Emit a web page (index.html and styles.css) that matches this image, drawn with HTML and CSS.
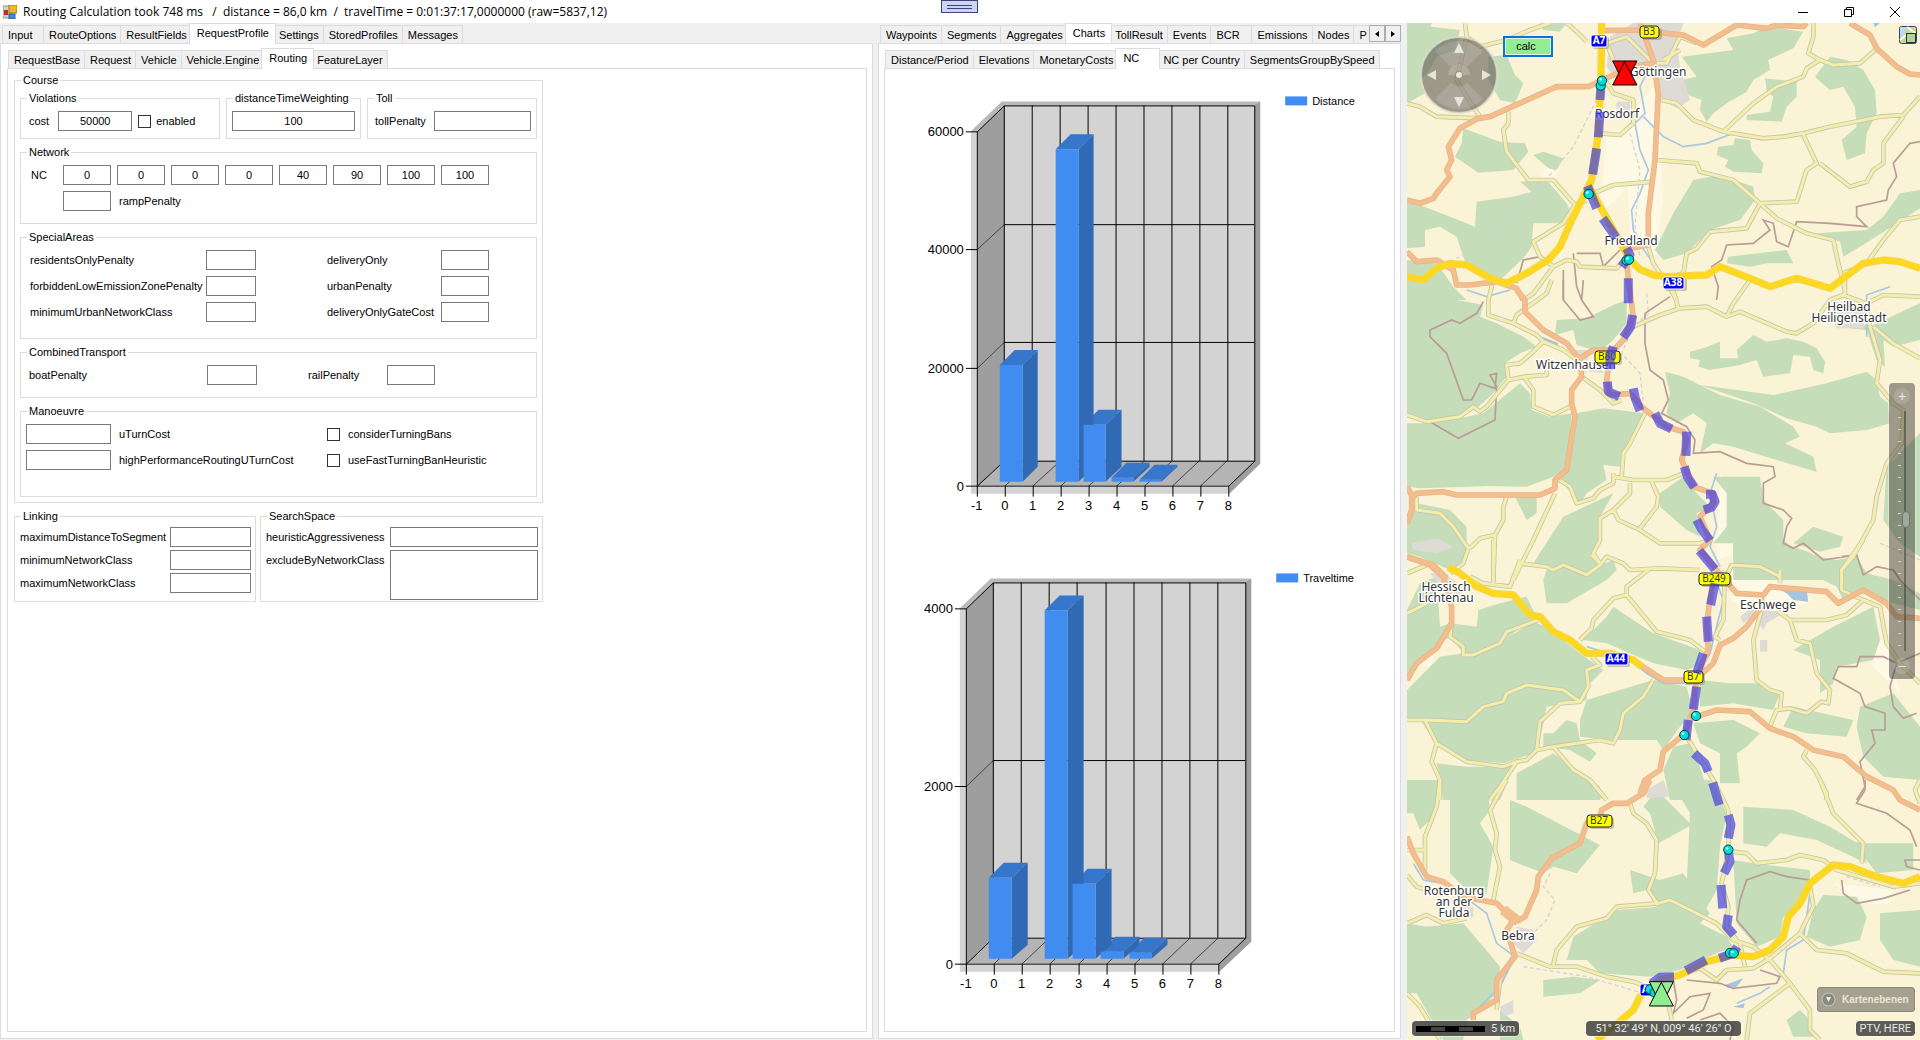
FILE: index.html
```html
<!DOCTYPE html>
<html lang="en">
<head>
<meta charset="utf-8">
<title>Routing Calculation</title>
<link rel="stylesheet" href="styles.css">
</head>
<body>
<div class="app">
  <header class="titlebar">
    <svg class="app-icon" width="14" height="14" viewBox="0 0 14 14" aria-hidden="true">
      <rect x="0" y="1" width="8" height="12" fill="#d4d0d4" stroke="#98949c"/>
      <rect x="1" y="5" width="4" height="5" fill="#c22c20"/>
      <rect x="6" y="0" width="8" height="8" fill="#f0b828" stroke="#a87808"/>
      <rect x="6" y="9" width="6" height="5" fill="#4488e0" stroke="#2860b0"/>
    </svg>
    <h1 class="title">Routing Calculation took 748 ms   /  distance = 86,0 km  /  travelTime = 0:01:37:17,0000000 (raw=5837,12)</h1>
    <button class="grip" type="button" aria-label="Toolbar grip"><span></span></button>
    <div class="window-buttons">
      <button type="button" aria-label="Minimize"><svg width="10" height="10" viewBox="0 0 10 10"><path d="M0 5.5H10"/></svg></button>
      <button type="button" aria-label="Restore"><svg width="10" height="10" viewBox="0 0 10 10"><path d="M.5 2.5H7.5V9.500H.5ZM2.500 2.500V.5H9.500V7.500H7.500"/></svg></button>
      <button type="button" aria-label="Close"><svg width="10" height="10" viewBox="0 0 10 10"><path d="M0 0L10 10M10 0L0 10"/></svg></button>
    </div>
  </header>

  <main class="panes">
    <section class="pane">
      <nav class="tabs" role="tablist" aria-label="Request">
        <button class="tab" role="tab">Input</button>
        <button class="tab" role="tab">RouteOptions</button>
        <button class="tab" role="tab">ResultFields</button>
        <button class="tab selected" role="tab" aria-selected="true">RequestProfile</button>
        <button class="tab" role="tab">Settings</button>
        <button class="tab" role="tab">StoredProfiles</button>
        <button class="tab" role="tab">Messages</button>
      </nav>
      <div class="page">
        <nav class="tabs inner" role="tablist" aria-label="Request profile">
          <button class="tab" role="tab">RequestBase</button>
          <button class="tab" role="tab">Request</button>
          <button class="tab" role="tab">Vehicle</button>
          <button class="tab" role="tab">Vehicle.Engine</button>
          <button class="tab selected" role="tab" aria-selected="true">Routing</button>
          <button class="tab" role="tab">FeatureLayer</button>
        </nav>
        <div class="page inner-page">
          <form class="routing">
            <fieldset class="course">
              <legend>Course</legend>
              <div class="top-row">
                <fieldset class="violations">
                  <legend>Violations</legend>
                  <label for="cost">cost</label>
                  <input class="num" id="cost" type="text" value="50000">
                  <input id="enabled" type="checkbox"><label for="enabled">enabled</label>
                </fieldset>
                <fieldset class="weighting">
                  <legend>distanceTimeWeighting</legend>
                  <input class="num" type="text" value="100" aria-label="distanceTimeWeighting">
                </fieldset>
                <fieldset class="toll">
                  <legend>Toll</legend>
                  <label for="toll">tollPenalty</label>
                  <input id="toll" type="text">
                </fieldset>
              </div>
              <fieldset class="network">
                <legend>Network</legend>
                <div class="nc-row">
                  <span>NC</span>
                  <input class="num" type="text" value="0" aria-label="NC 0">
                  <input class="num" type="text" value="0" aria-label="NC 1">
                  <input class="num" type="text" value="0" aria-label="NC 2">
                  <input class="num" type="text" value="0" aria-label="NC 3">
                  <input class="num" type="text" value="40" aria-label="NC 4">
                  <input class="num" type="text" value="90" aria-label="NC 5">
                  <input class="num" type="text" value="100" aria-label="NC 6">
                  <input class="num" type="text" value="100" aria-label="NC 7">
                  <input class="ramp" id="ramp" type="text"><label class="ramp-label" for="ramp">rampPenalty</label>
                </div>
              </fieldset>
              <fieldset class="special">
                <legend>SpecialAreas</legend>
                <div class="special-grid">
                  <label for="rop">residentsOnlyPenalty</label><input id="rop" type="text">
                  <label for="do">deliveryOnly</label><input id="do" type="text">
                  <label for="flez">forbiddenLowEmissionZonePenalty</label><input id="flez" type="text">
                  <label for="up">urbanPenalty</label><input id="up" type="text">
                  <label for="munc">minimumUrbanNetworkClass</label><input id="munc" type="text">
                  <label for="dogc">deliveryOnlyGateCost</label><input id="dogc" type="text">
                </div>
              </fieldset>
              <fieldset class="combined">
                <legend>CombinedTransport</legend>
                <div class="combined-grid">
                  <label for="boat">boatPenalty</label><input id="boat" type="text">
                  <label for="rail">railPenalty</label><input id="rail" type="text">
                </div>
              </fieldset>
              <fieldset class="manoeuvre">
                <legend>Manoeuvre</legend>
                <div class="manoeuvre-grid">
                  <input id="uturn" type="text"><label for="uturn">uTurnCost</label>
                  <input id="bans" type="checkbox"><label for="bans">considerTurningBans</label>
                  <input id="hpr" type="text"><label for="hpr">highPerformanceRoutingUTurnCost</label>
                  <input id="fast" type="checkbox"><label for="fast">useFastTurningBanHeuristic</label>
                </div>
              </fieldset>
            </fieldset>
            <div class="bottom-row">
              <fieldset class="linking">
                <legend>Linking</legend>
                <div class="pairs">
                  <label for="mds">maximumDistanceToSegment</label><input id="mds" type="text">
                  <label for="minc">minimumNetworkClass</label><input id="minc" type="text">
                  <label for="maxc">maximumNetworkClass</label><input id="maxc" type="text">
                </div>
              </fieldset>
              <fieldset class="search">
                <legend>SearchSpace</legend>
                <div class="pairs">
                  <label for="ha">heuristicAggressiveness</label><input id="ha" type="text">
                  <label for="ebn">excludeByNetworkClass</label><textarea id="ebn"></textarea>
                </div>
              </fieldset>
            </div>
          </form>
        </div>
      </div>
    </section>

    <section class="pane results">
      <div class="tab-strip">
        <nav class="tabs" role="tablist" aria-label="Results">
          <button class="tab" role="tab">Waypoints</button>
          <button class="tab" role="tab">Segments</button>
          <button class="tab" role="tab">Aggregates</button>
          <button class="tab selected" role="tab" aria-selected="true">Charts</button>
          <button class="tab" role="tab">TollResult</button>
          <button class="tab" role="tab">Events</button>
          <button class="tab" role="tab">BCR</button>
          <button class="tab" role="tab">Emissions</button>
          <button class="tab" role="tab">Nodes</button>
          <button class="tab" role="tab">P</button>
        </nav>
        <div class="scroller">
          <button type="button" aria-label="Previous tabs"><svg width="4" height="6" viewBox="0 0 4 6"><path d="M4 0V6L0 3Z"/></svg></button>
          <button type="button" aria-label="Next tabs"><svg width="4" height="6" viewBox="0 0 4 6"><path d="M0 0V6L4 3Z"/></svg></button>
        </div>
      </div>
      <div class="page">
        <nav class="tabs inner" role="tablist" aria-label="Charts">
          <button class="tab" role="tab">Distance/Period</button>
          <button class="tab" role="tab">Elevations</button>
          <button class="tab" role="tab">MonetaryCosts</button>
          <button class="tab selected" role="tab" aria-selected="true">NC</button>
          <button class="tab" role="tab">NC per Country</button>
          <button class="tab" role="tab">SegmentsGroupBySpeed</button>
        </nav>
        <div class="page inner-page charts">
          <svg class="chart" viewBox="885 69 510 481" role="img" aria-label="Distance per network class">
            <path fill="#b9bab9" d="M971 131L1002 101H1261L1255 106H1005L978 132Z"/>
            <path fill="#d3d3d3" d="M971 131H978V487H1230V494H971Z"/>
            <path fill="#9e9e9e" d="M1255 105L1261 101V464L1230 494V486L1255 461Z"/>
            <path fill="#d3d3d3" d="M1005 105H1255V461H1005Z"/>
            <path fill="#9e9e9e" d="M978 131L1005 105V461L978 486Z"/>
            <path fill="#b4b4b4" d="M978 486L1005 461H1255L1230 486Z"/>
            <path class="diag" d="M978 249L1005 224M978 368L1005 342M1005.500 486L1033 461M1033.500 486L1061 461M1061.500 486L1089 461M1089.500 486L1117 461M1117.500 486L1145 461M1145.500 486L1173 461M1173.500 486L1200 461M1201.500 486L1228 461"/>
            <path class="line" d="M1004.500 105.500H1255.500V461.500H1004.500ZM1004.500 224.500H1255M1004.500 342.500H1255M1032.500 105V461M1060.500 105V461M1088.500 105V461M1116.500 105V461M1144.500 105V461M1172.500 105V461M1200.500 105V461M1228.500 105V461"/>
            <path class="line" d="M1004.500 105.500L977.500 131.500V486.500L1004.500 461.500M966 131.500H978M966 249.500H978M966 368.500H978M966 486.500H1229.500L1255.500 461.500M977.500 486V497M1005.500 486V497M1033.500 486V497M1061.500 486V497M1089.500 486V497M1117.500 486V497M1145.500 486V497M1173.500 486V497M1201.500 486V497M1229.500 486V497"/>
            <path class="top" d="M1000 365L1015 350H1038L1023 365ZM1056 149L1071 134H1094L1079 149ZM1084 425L1099 410H1122L1106 425ZM1112 478L1127 463H1150L1134 478ZM1140 480L1155 465H1178L1162 480Z"/>
            <path class="side" d="M1023 365L1038 350V467L1023 482ZM1079 149L1094 134V467L1079 482ZM1106 425L1122 410V467L1106 482ZM1134 478L1150 463V467L1134 482ZM1162 480L1178 465V467L1162 482Z"/>
            <path class="front" d="M1000 365H1023V482H1000ZM1056 149H1079V482H1056ZM1084 425H1106V482H1084ZM1112 478H1134V482H1112ZM1140 480H1162V482H1140Z"/>
            <g class="y-labels"><text x="964" y="136">60000</text><text x="964" y="254">40000</text><text x="964" y="373">20000</text><text x="964" y="491">0</text></g>
            <g class="x-labels"><text x="977" y="510">-1</text><text x="1005" y="510">0</text><text x="1033" y="510">1</text><text x="1061" y="510">2</text><text x="1089" y="510">3</text><text x="1117" y="510">4</text><text x="1145" y="510">5</text><text x="1173" y="510">6</text><text x="1201" y="510">7</text><text x="1229" y="510">8</text></g>
            <rect class="front" x="1286" y="96" width="22" height="9"/><text class="legend" x="1313" y="105">Distance</text>
          </svg>
          <svg class="chart" viewBox="885 550 510 481" role="img" aria-label="Travel time per network class">
            <path fill="#b9bab9" d="M960 608L991 578H1252L1246 583H994L967 609Z"/>
            <path fill="#d3d3d3" d="M960 608H967V965H1220V972H960Z"/>
            <path fill="#9e9e9e" d="M1246 582L1252 578V942L1220 972V964L1246 939Z"/>
            <path fill="#d3d3d3" d="M994 582H1246V939H994Z"/>
            <path fill="#9e9e9e" d="M967 608L994 582V939L967 964Z"/>
            <path fill="#b4b4b4" d="M967 964L994 939H1246L1220 964Z"/>
            <path class="diag" d="M967 786L994 760M994.500 964L1021 939M1022.500 964L1049 939M1050.500 964L1077 939M1079.500 964L1106 939M1107.500 964L1134 939M1135.500 964L1162 939M1163.500 964L1190 939M1191.500 964L1218 939"/>
            <path class="line" d="M993.500 582.500H1246.500V938.500H993.500ZM993.500 760.500H1246M1021.500 582V938M1049.500 582V938M1077.500 582V938M1106.500 582V938M1134.500 582V938M1162.500 582V938M1190.500 582V938M1218.500 582V938"/>
            <path class="line" d="M993.500 582.500L966.500 608.500V964.500L993.500 938.500M955 608.500H967M955 786.500H967M955 964.500H1219.500L1246.500 938.500M966.500 964V975M994.500 964V975M1022.500 964V975M1050.500 964V975M1079.500 964V975M1107.500 964V975M1135.500 964V975M1163.500 964V975M1191.500 964V975M1219.500 964V975"/>
            <path class="top" d="M989 878L1004 863H1028L1012 878ZM1045 610L1060 595H1084L1068 610ZM1073 884L1088 869H1112L1096 884ZM1101 952L1116 937H1140L1124 952ZM1130 953L1145 938H1168L1152 953Z"/>
            <path class="side" d="M1012 878L1028 863V945L1012 959ZM1068 610L1084 595V945L1068 959ZM1096 884L1112 869V945L1096 959ZM1124 952L1140 937V945L1124 959ZM1152 953L1168 938V945L1152 959Z"/>
            <path class="front" d="M989 878H1012V959H989ZM1045 610H1068V959H1045ZM1073 884H1096V959H1073ZM1101 952H1124V959H1101ZM1130 953H1152V959H1130Z"/>
            <g class="y-labels"><text x="953" y="613">4000</text><text x="953" y="791">2000</text><text x="953" y="969">0</text></g>
            <g class="x-labels"><text x="966" y="988">-1</text><text x="994" y="988">0</text><text x="1022" y="988">1</text><text x="1050" y="988">2</text><text x="1079" y="988">3</text><text x="1107" y="988">4</text><text x="1135" y="988">5</text><text x="1163" y="988">6</text><text x="1191" y="988">7</text><text x="1219" y="988">8</text></g>
            <rect class="front" x="1277" y="573" width="22" height="9"/><text class="legend" x="1304" y="582">Traveltime</text>
          </svg>
        </div>
      </div>
    </section>

    <section class="map" aria-label="Map">
      <svg class="map-canvas" viewBox="1407 23 513 1017" preserveAspectRatio="xMidYMid slice">
        <defs>
          <g id="minor">
            <path d="M21 310L60 320 110 350 240 355M500 69L530 95 560 125M195 69L200 110 240 140 320 120 390 90 450 69M200 110L170 240 200 290 240 350M325 335L325 370 310 390 320 455 385 540 460 540 525 615 560 600M525 615L490 670 400 725 420 770 460 800 500 780 530 785 540 800 650 805 680 770M460 800L400 880 370 900M580 580L640 555 700 550 760 545M770 480L890 490 900 515 1000 540 1080 610 1130 655 1220 700 1300 720 1315 790 1335 870M785 300L830 310 880 360 970 395 1090 415 1150 410 1210 400 1290 380 1440 350 1510 345 1560 290M970 395L1060 310 1130 260 1210 230 1220 205 1260 180 1225 160 1240 110V69M1260 180L1300 195 1380 190 1425 150M1210 405L1250 490 1220 510 1190 605 1080 610 1040 685 930 695 890 745 860 760 850 820 800 835M1260 490L1350 560 1400 545 1420 510 1450 490V430L1510 350M1560 650L1500 660 1450 720 1400 790 1330 820M745 740L760 790 800 850 830 900M600 400L660 405 700 370V300L640 280 610 230M640 180L620 130 680 110 750 180M760 190L800 190 840 110 890 130M790 180L840 150"/>
            <path transform="translate(0 840)" d="M455 0L440 40 350 105 340 130 265 105 265 60 280 0M340 130L410 165 430 185 490 210 530 240M430 185L400 215 360 250 320 255 325 300 375 290 440 285V260M325 300L260 380 240 395 220 380 180 410 80 425 21 405M375 295L400 330V380L460 405 510 380M545 290L600 330 640 370 665 360M735 400L690 490 670 520 665 590M640 590L700 600 800 600 850 580M640 580V610L600 630 580 655 530 670 510 620 470 595M690 610V640L640 690 655 720 720 750 780 790 900 790 930 780M755 605L775 650 770 680 720 745M640 690L600 715V780L580 820 600 850M700 140L780 105 840 85 920 80 980 110 1020 95 1160 155 1190 160 1240 130 1290 60 1330 45 1400 70 1450 45 1560 50M980 110L1000 70 1050 0M820 30L835 85M1335 0V45M1400 70L1410 140 1440 240 1430 310 1480 370 1510 390 1505 490 1460 550 1430 650 1420 720 1360 830 1325 870V930M1420 140L1480 190 1560 235M50 650V690L120 700 160 740 205 805 215 800 240 775 285 765 280 900M320 650L310 680V720L285 765M465 640L400 780 340 900M360 850L440 860 460 870 490 855 560 885 600 855 620 830 670 850 690 870 780 865 900 870M975 900L995 855 1080 860 1140 890M205 805L190 850 150 880M600 850L575 825"/>
            <path transform="translate(0 1620)" d="M360 60L330 140 250 130 210 110M280 130V0M680 165L640 175 580 240 575 265 540 300M745 90L680 140V165L770 275 870 300 915 335M415 240L320 275 300 310 220 345 190 345V320L150 290 155 250M21 540L75 540 200 545 250 500 310 485 320 460 380 435 490 450 540 485 565 440 560 390 600 375 575 350M540 485L480 490 420 545 410 630 460 620 600 600 640 610 660 570 670 520 730 470 760 420M410 630L380 660 350 665 300 740 270 780M75 540L110 610 200 665 310 680 350 665M110 610L95 665 120 720V780M460 620L520 690 570 720 620 780M975 90L970 240 945 290 960 300M1170 240L1280 240 1340 225 1390 180 1440 200 1460 310 1500 370 1560 430M1170 240L1190 300 1230 310 1250 400 1290 450 1285 490 1265 485 1220 520 1170 505 1130 510 1110 560M1090 190L1060 300 1070 420 1110 450 1145 460 1140 510M1130 210L1170 240M1390 0L1325 90V150L1390 180M1220 630L1210 650 1245 690 1280 760V780M860 590L940 720 985 810M1140 90V130M21 220L80 190M21 100L80 75"/>
            <path transform="translate(0 2340)" d="M320 0L270 90 290 160 285 210 300 260 280 360M120 0L110 80 75 170V270M75 210H21M570 0L620 60M690 70L700 100 740 130 770 180 765 280 745 330 775 375M350 520L450 560 530 560 620 590 700 605 750 625M460 555L470 510 530 440 620 415 650 380 775 370 810 360 950 430 1000 480 1060 500 1110 540 1170 610 1230 690V750L1260 780M985 90V210L965 310 985 380 980 440 1010 480M1000 215L1040 220 1070 250 1160 240 1200 225 1270 240 1310 270 1480 320 1560 310M1260 0L1280 50 1300 100 1390 190 1385 250M820 590L900 565 950 600 980 570 1060 565 1110 535 1200 460 1240 380 1230 320M1200 460L1250 510 1340 520 1450 575 1560 580M1170 610L1050 700 1040 780M345 520L300 600 290 690M21 430L80 405 130 430 200 415M21 640L60 680 120 780M21 285L50 320 80 330M1020 490L1035 560M805 670L815 720M1560 0L1545 30 1560 70"/>
          </g>
          <g id="major">
            <path d="M21 600L60 610 100 595 110 580 150 530 140 510 155 480 145 440 180 385 235 355 270 350 370 305 470 260H565L640 225 700 200 760 190M600 92L720 90 800 100 850 105 910 135 1010 75 1100 85 1130 75 1210 80 1220 69M720 69L760 180 775 280 765 480 745 640V735L665 750M1350 69L1410 105 1430 145 1490 200 1530 222 1560 225M21 755L50 785 110 780 160 810 170 855 210 855 290 845 350 865 370 900"/>
            <path transform="translate(0 840)" d="M350 30L375 60 375 95 430 150 500 190 520 215 540 240 545 290 515 330 515 370 525 410 515 470 500 570 465 600V625L420 645 290 645 170 645 130 635 50 640 35 655V690L21 730M21 620L40 655M540 235L580 210 640 210 670 180 700 110 685 0 680 -60M630 230L620 300 630 345 690 340 730 385 800 440 850 455 860 480 845 540 880 620 940 640V670L900 710 930 780 900 810 950 870M21 830L100 855 140 895"/>
            <path transform="translate(0 1620)" d="M21 50L90 75 130 110 155 200V250L110 325 50 370 21 420M950 90L1010 160 1090 165 1110 140 1280 155 1315 190 1390 150 1460 190 1490 230 1560 235M1085 170V200L1040 260 1000 295 960 315 940 370 895 410M940 110L920 250 925 330 890 410 880 510 855 580 790 635 780 690 735 720 720 760M720 375L790 420H880M890 530L950 510 1050 515 1110 565 1180 590 1240 630 1330 650 1400 710 1480 750 1500 780 1560 810"/>
            <path transform="translate(0 2340)" d="M750 0L730 40 680 70 640 70 605 90 600 110 560 130 540 190 455 235 415 290 410 330 375 410 350 425M21 170L40 220 80 290 130 305 190 350 290 370 340 420 320 450 345 530 290 600V660L220 700V720"/>
            <path transform="translate(0 2340)" stroke-width="30" d="M310 390L355 425"/>
          </g>
          <g id="motorway">
            <path d="M605 69L603 230 595 400 575 540 515 660 480 740 445 780 380 820 320 850 270 835 200 795 150 790 110 805 70 840 21 830M568 560L640 690 690 780 720 808 760 825 800 830 920 825 960 800 1050 835 1110 860 1190 835 1290 865 1390 790 1450 780 1500 785 1560 805"/>
            <path transform="translate(0 1620)" d="M145 82L180 100 230 140 280 160 340 165 390 225 420 230 460 275 510 300 560 340 630 340 700 360 725 380"/>
            <path transform="translate(0 2340)" d="M590 780L640 740 700 690 720 650 780 600 840 585 920 545 1000 525 1060 530 1110 510 1150 470 1165 410 1200 370 1230 310 1300 255 1350 260 1430 290 1510 310 1560 290"/>
          </g>
          <g id="forests">
            <path d="M21 69H95L92 80 180 90 165 150 110 170 85 215 60 240 75 280 21 310ZM265 170L320 165 345 225 370 250 345 310 300 300 265 240ZM420 69H500L480 95 430 90ZM190 385L300 425 375 430 385 455 340 510 235 518 165 470 185 430ZM400 465L430 455 490 475 470 510 445 505ZM360 545L440 540 500 610 515 640 480 670 400 670 395 740 370 775 290 850 200 800 170 710 120 680 75 690 75 740 21 745V610L60 615 150 650 225 680 230 605 340 590 395 575ZM21 780L110 790 160 860 200 900H21ZM845 170L1000 150 980 115 1060 100 1110 75 1170 90 1210 95 1180 145 1105 180 1110 210 1060 240 1040 275 980 310 940 340 920 365 900 330 905 300 850 280 845 240 890 230ZM1095 235L1190 245V290L1160 320 1145 365 1040 360V345L1110 335 1120 290 1100 270ZM1245 230L1290 170 1340 180 1390 210 1425 270 1430 340 1400 400 1395 460 1340 480 1325 420 1370 380 1365 320 1330 260 1290 270ZM955 440L1000 435 1005 415 1050 420 1055 450 1090 490 1085 520 1000 515 975 500 985 480 950 465ZM880 540L960 525 1060 560 1065 600 1020 660 930 690 890 730 860 760 790 780 765 750 800 680 820 640ZM1560 570V625L1460 690 1380 740 1330 770 1320 725 1250 700 1400 690 1450 650 1500 580ZM985 770L1160 750 1180 790 1100 790 1050 800 980 790Z"/>
            <path transform="translate(0 840)" d="M21 20L120 50 250 75 240 110 290 130 370 170 410 200 360 220 315 250 320 290 280 340 230 385 180 410 90 425 21 405ZM21 430L90 430 180 415 250 400 360 310 390 340 395 390 450 410 515 400 500 570 460 590 380 620 265 618 60 625 21 620ZM530 400L610 385 735 400 700 470 670 510 660 560 610 555 620 600 560 640 540 670 480 600 495 580 505 500ZM470 120L560 115 640 75 680 60 680 130 640 180 600 215 530 195 520 150 465 165ZM870 215L910 205 960 185V235L1015 235 1010 210 1060 165 1100 185 1160 175 1210 185 1250 205 1275 245 1270 280 1240 270 1230 230 1180 225 1170 280 1090 290 1070 240 1020 255 930 270 895 260 900 240 870 235ZM795 275L850 290 960 345 1080 380 1180 440 1200 470 1155 490 1240 530 1250 575 1130 540 1000 500 940 490 900 520 920 430 880 400 830 430 800 400 810 340ZM900 315L1120 345 1280 310 1400 275 1430 300 1440 350 1465 370 1470 430 1400 450 1290 460 1250 440 1160 415 1060 370ZM1300 140L1420 135 1560 70V180L1480 200 1450 180 1455 260 1430 240 1400 150ZM940 590L1080 590 1090 660 1150 720V790L1210 810 1280 840 1280 900H1000V790H940L980 740V640ZM1180 790L1240 740 1330 770 1320 800 1260 815ZM1460 560L1560 460V830L1500 790 1450 720ZM780 640L850 590 890 640 930 680 890 700 900 770 860 750 780 680ZM50 670L150 690 200 740 200 840 150 870 60 830 21 820V700ZM345 650H410V700L380 720ZM490 710L640 640 600 710V780L570 830 600 860 550 880 400 850Z"/>
            <path transform="translate(0 1620)" d="M450 60L560 90 640 60 650 90 620 120 500 190 440 190 430 120ZM1000 0H1150L1200 40 1310 60 1370 50 1400 100 1480 120 1560 160V210L1480 190 1390 160 1330 180 1310 140 1250 110 1140 90 1000 60ZM21 210L60 130 110 110 120 260 150 250 230 260 235 210 300 190 380 170 410 230 380 250 300 310 200 350 150 290 100 320 21 420ZM190 340L310 300 400 245 440 260 540 340 610 390 560 440V480L540 485 440 500 420 600 400 640 310 670 200 660 110 610 60 540 21 540V450L120 350ZM620 230L640 200 760 280 900 330 890 380 860 390 760 370 620 310 550 300ZM560 480L760 420 860 440 880 520 840 560 790 630 770 600 630 600 540 590V540ZM430 580L460 580 500 540 530 550 540 600 590 640 570 665 510 630 430 620ZM900 420L990 430 1080 430 1140 460 1120 510 1000 490 900 500ZM1180 330L1300 260 1420 200 1440 300 1420 360 1310 380 1300 430 1260 460V360ZM1380 500L1480 460 1560 560V720L1450 710 1390 650 1370 560ZM880 550L1000 540 1080 580 1040 620 1010 640 1020 730H960V640L900 610ZM1180 500L1360 540 1340 590 1220 580 1150 560ZM820 620L870 610 900 680 930 780H810L790 690ZM110 670L200 680 340 680 300 780H130ZM350 700L460 640 520 680 600 740V780H350Z"/>
            <path transform="translate(0 2340)" d="M21 0H130L120 60 90 120 60 150 40 100 21 100ZM150 60L260 0 270 90 240 130 280 200 260 340 200 330 150 280ZM350 0H560L620 60 500 30ZM330 60L380 80 600 195 530 280 460 260 430 280 330 240ZM770 30L820 80 875 135 775 190 750 100 730 80ZM690 270L780 300 850 280 900 360 930 400 900 430 770 380 740 330 700 340ZM810 0H930L980 100 960 200 950 330 900 420 850 400 780 350 860 320 870 100ZM650 390L780 380 900 430 980 470 1000 500 900 540 840 570 750 590 600 580 560 540 500 540 520 470ZM1030 80L1180 90 1290 140 1390 200 1400 250 1250 180 1140 160 1100 200 1030 190ZM1000 240L1060 250 1230 270V300L1210 360 1150 410 1140 470 1070 500 1010 430ZM1240 390L1270 345 1370 350 1400 410 1380 480 1290 500 1220 470ZM1440 400L1560 390V560L1480 540 1440 480ZM1220 160L1390 190 1540 190V270L1430 280 1400 240ZM21 430L80 440 190 430 250 500 300 560 290 640 240 690 200 720 190 780H130L50 640 21 640ZM300 690L360 740 370 780H300ZM430 600L520 590 600 600 540 640 430 650ZM1160 720L1200 690 1230 720 1240 770H1180Z"/>
          </g>
        </defs>

        <g transform="scale(.33333)">
          <g transform="translate(4200 0)">
          <rect x="0" y="0" width="1600" height="3140" fill="#faf3d6"/>
          <path fill="#fef9e4" d="M700 330L760 260 780 400 790 600 760 800 690 700 680 500ZM620 400L700 380 690 560 600 640ZM440 500L480 480 460 560 400 590ZM30 1900L110 1950 90 2000 30 2000ZM960 1420L1000 1500 1010 1660 950 1680ZM1000 1700L1130 1740 1240 1800 1100 1860 990 1800ZM1400 1900L1470 1930 1500 2080 1420 2000ZM1300 2650L1480 2670 1470 2710 1380 2710Z"/>
          <use href="#forests" class="forest"/>
          <path fill="#dedbd5" d="M630 110L700 69H850L830 130 840 200 870 300 830 325 785 300 760 200 720 230 650 240 620 200ZM650 305H690V335H650ZM1310 905L1400 920 1390 985 1310 985 1290 940ZM520 1050L570 1050 560 1090 550 1120 600 1100 610 1120 530 1110ZM35 1630L110 1615 160 1640 110 1660 40 1650ZM90 1720L130 1720 190 1760 180 1790 150 1790ZM1020 1850L1060 1820 1150 1840 1100 1870 1090 1890 1060 1850 1030 1870ZM740 2370L790 2340 810 2390 740 2395ZM350 2780L400 2790 410 2820 370 2860 340 2830ZM300 3020L340 3000 340 3040 310 3050ZM1080 1920H1102V1955H1080ZM180 2720H220V2750H190Z"/>
          <path class="water" d="M750 200L720 260 735 340 705 370 720 450 745 510 720 580 695 630 700 690 725 740 780 820M730 350L790 410 850 440 920 430 1000 400M200 870L260 890 330 870M420 1010L470 1030M950 1420L930 1480 950 1580 930 1640 960 1700M940 1720L970 1800 930 1960 880 2050 790 2050 740 2020 690 1980 560 1940M40 2590L70 2640 130 2650 220 2710 260 2740 290 2830 345 2870 300 2960 240 3020M1400 1010V885L1470 860M1230 2680L1210 2820 1160 2850 1150 2920M1010 3010L1080 2980 1110 2960"/>
          <path fill="#a6c4de" d="M1120 1760L1220 1770 1225 1805 1180 1800 1160 1780ZM420 1010L475 1030 470 1040 430 1030ZM975 2955L1030 2935 1010 2960 985 2965ZM1000 3020L1035 3010 1030 3025ZM1420 69H1440L1425 82Z"/>
          <path class="rail" d="M600 280L520 440 330 670 170 775M690 400L720 510 705 680 720 770M740 880L745 940 700 980 665 1060 720 1120 730 1210M160 1610L180 1660 150 1700M450 2620L430 2660 465 2700 440 2760 400 2800M370 2900L560 2930 730 2980M1440 1630L1560 1680M1340 2630L1440 2660"/>
          <path class="border" d="M1560 425L1530 430 1480 490 1490 530 1465 570 1460 600 1370 620V650L1400 680 1290 670 1190 665 1165 740 1130 725 1120 670 1090 660 1110 690 1060 730 980 735 965 780 935 800 955 860 950 900M420 770L370 780 350 850M530 760L600 760 610 800 660 750M490 810V900M520 760L530 860 545 900"/>
          <path class="border" transform="translate(0 840)" d="M250 65L230 100 180 130 155 120 90 150V170L140 220 190 360 215 360 240 310 285 325 290 280 270 285 290 320 285 420 175 475 90 425M490 0V60L540 120 580 110 545 60 550 0M810 50L735 100V190L750 270 790 300 805 360 785 400 860 440 885 480 880 520 960 515 1040 550 1120 560 1125 590 1090 610V670L1150 690 1175 715 1160 740 1150 790 1180 805 1210 790 1270 840 1370 825 1390 885 1430 860 1480 870M1370 825L1325 830"/>
          <path class="border" transform="translate(0 1620)" d="M1480 90L1500 120 1560 180M1560 340L1490 370 1450 350 1380 350 1370 380 1315 380 1300 415 1380 460 1395 500 1455 520V570L1415 570 1425 610 1380 665 1395 740 1370 780M1490 370L1470 440 1480 500 1510 535 1550 520"/>
          <path class="border" transform="translate(0 2340)" d="M1395 0V30L1370 70 1460 100 1530 150 1550 200M1560 240L1515 240 1520 260 1560 270M1070 490L1010 420 1020 360 1040 300 1110 275 1160 290 1230 300M1325 300L1330 340 1370 370 1450 355 1530 330M820 600L830 660 820 700 870 650 930 640 910 690 860 715M860 600L960 610 1000 625 1130 610 1140 590 1080 570M900 720L960 700 1000 740 990 780"/>
          <use href="#minor" class="road minor-case"/><use href="#minor" class="road minor-fill"/>
          <use href="#major" class="road major-case"/><use href="#major" class="road major-fill"/>
          <use href="#motorway" class="road motorway-case"/><use href="#motorway" class="road motorway-fill"/>
          </g>
        </g>

        <g class="place">
          <text x="1658" y="76">Göttingen</text><text x="1617" y="118">Rosdorf</text><text x="1631" y="245">Friedland</text>
          <text x="1849" y="311">Heilbad</text><text x="1849" y="322">Heiligenstadt</text><text x="1576" y="369">Witzenhausen</text>
          <text x="1446" y="591">Hessisch</text><text x="1446" y="602">Lichtenau</text><text x="1768" y="609">Eschwege</text>
          <text x="1454" y="895">Rotenburg</text><text x="1454" y="906">an der</text><text x="1454" y="917">Fulda</text><text x="1518" y="940">Bebra</text>
        </g>
        <g fill="#807860" opacity=".4">
          <rect x="1593" y="37" width="16" height="12" rx="2"/><rect x="1642" y="28" width="20" height="12" rx="3"/><rect x="1665" y="279" width="22" height="12" rx="2"/><rect x="1597" y="353" width="25" height="12" rx="3"/><rect x="1701" y="575" width="31" height="12" rx="3"/><rect x="1685" y="673" width="20" height="12" rx="3"/><rect x="1607" y="655" width="23" height="12" rx="2"/><rect x="1589" y="817" width="25" height="12" rx="3"/>
        </g>
        <g class="shield-a">
          <rect x="1591" y="35" width="16" height="12" rx="2"/><rect x="1663" y="277" width="21" height="12" rx="2"/><rect x="1605" y="653" width="23" height="12" rx="2"/><rect x="1640" y="984" width="16" height="12" rx="2"/>
          <text x="1599" y="44">A7</text><text x="1673" y="286">A38</text><text x="1616" y="662">A44</text><text x="1648" y="993">A4</text>
        </g>
        <g class="shield-b">
          <rect x="1640" y="26" width="19" height="12" rx="3"/><rect x="1595" y="351" width="25" height="12" rx="3"/><rect x="1699" y="573" width="31" height="12" rx="3"/><rect x="1684" y="671" width="19" height="12" rx="3"/><rect x="1587" y="815" width="25" height="12" rx="3"/>
          <text x="1649" y="35">B3</text><text x="1607" y="360">B80</text><text x="1714" y="582">B249</text><text x="1693" y="680">B7</text><text x="1599" y="824">B27</text>
        </g>

        <g transform="scale(.33333)">
          <g transform="translate(4200 0)">
            <g class="route">
              <path d="M603 255L600 300M600 335L595 412M590 445L578 523M562 558L590 625M608 655L648 712M680 745L690 765 665 800M685 835V910"/>
              <path transform="translate(0 840)" d="M698 105L692 140 670 172M640 200L630 230V268M622 305L625 335 658 350M700 325L706 355 720 392M765 400L780 430 815 447M860 455L858 528M853 560L862 590 883 622M918 643L937 643 945 665 935 682 912 690M890 720L905 748 930 782M898 812L945 868"/>
              <path transform="translate(0 1620)" d="M945 130L932 195M920 230L925 305M910 340L890 400M890 440L880 508M865 540L858 600M882 640L915 670 925 695M938 728L958 795"/>
              <path transform="translate(0 2340)" d="M985 105L993 135 985 175M985 215L990 245 972 280M963 315L968 385M985 405L980 440 1002 465M1012 500L1000 520 958 535M918 540L858 572M822 590L780 592 755 610"/>
            </g>
            <g class="stop">
              <circle cx="602" cy="257" r="14"/><circle cx="606" cy="242" r="14"/><circle cx="566" cy="582" r="14"/><circle cx="680" cy="781" r="14"/><circle cx="687" cy="779" r="14"/><circle cx="888" cy="2148" r="14"/><circle cx="853" cy="2205" r="14"/><circle cx="985" cy="2549" r="14"/><circle cx="990" cy="2859" r="14"/><circle cx="1001" cy="2860" r="14"/><circle cx="750" cy="2968" r="14"/><circle cx="764" cy="2978" r="14"/>
            </g>
            <g fill="#b4ffff"><circle cx="602" cy="238" r="4"/><circle cx="562" cy="578" r="4"/><circle cx="683" cy="775" r="4"/><circle cx="884" cy="2144" r="4"/><circle cx="849" cy="2201" r="4"/><circle cx="981" cy="2545" r="4"/><circle cx="997" cy="2856" r="4"/></g>
            <g stroke="#000" stroke-width="3">
              <path fill="#f00" d="M638 183H711L674 255Z"/><path fill="#f00" d="M674 185L711 255H638Z"/>
              <path fill="#90ee90" d="M748 2945H820L784 3018Z"/><path fill="#90ee90" d="M784 2947L820 3018H748Z"/>
            </g>
          </g>
        </g>
      </svg>

      <button class="compass" type="button" aria-label="Pan map">
        <svg width="80" height="80" viewBox="0 0 80 80">
          <circle cx="40" cy="40" r="38" fill="#66605a" fill-opacity=".62" stroke="#dcdccc" stroke-opacity=".8" stroke-width="2"/>
          <path d="M16 16L32 32A11 11 0 0 1 48 32L64 16A34 34 0 0 0 16 16ZM16 64L32 48A11 11 0 0 0 48 48L64 64A34 34 0 0 1 16 64Z" fill="#fff" fill-opacity=".14"/>
          <path d="M29 40A11 11 0 0 1 51 40H44A4 4 0 0 0 36 40Z" fill="#fff" fill-opacity=".2"/>
          <path d="M40 8L45 18H35ZM40 72L45 62H35ZM8 40L17 35V45ZM72 40L63 35V45Z" fill="#e4e6dc"/><circle cx="40" cy="40" r="3" fill="#e8eae0"/>
        </svg>
      </button>
      <button class="calc" type="button">calc</button>
      <button class="overview" type="button" aria-label="Overview map">
        <svg width="18" height="18" viewBox="0 0 18 18"><rect x=".5" y=".5" width="17" height="17" rx="2" fill="#c8d898" stroke="#34455c"/><path d="M1 1H7L5 8 1 12Z" fill="#b8dcf0"/><path d="M8 1L16 7M1 14L7 9" stroke="#fff" stroke-width="2"/><rect x="7.500" y="7.500" width="9" height="9" fill="#b4d48c" stroke="#1c3450"/></svg>
      </button>
      <div class="zoom">
        <button type="button" aria-label="Zoom in">+</button>
        <input type="range" min="0" max="100" value="55" aria-label="Zoom level">
        <button type="button" aria-label="Zoom out">−</button>
      </div>
      <button class="layers" type="button"><svg width="15" height="15" viewBox="0 0 15 15"><circle cx="7.500" cy="7.500" r="6.500" fill="#8c8a80" stroke="#c8c8bc"/><path d="M5 5H10L7.500 10Z" fill="#f0f0e8"/></svg>Kartenebenen</button>
      <footer class="status">
        <div class="badge"><span class="scale-bar"></span>5 km</div>
        <div class="badge coords">51° 32′ 49″ N, 009° 46′ 26″ O</div>
        <div class="badge source">PTV, HERE</div>
      </footer>
    </section>
  </main>
</div>
</body>
</html>
```
FILE: styles.css
```css
* { box-sizing: border-box; }
body { margin: 0; background: #f0f0f0; color: #000; font: 11px/14px "Liberation Sans", Arial, sans-serif; }
button, input, textarea { font: inherit; color: inherit; margin: 0; padding: 0; border-radius: 0; }
.app { min-height: 600px; height: 100vh; display: flex; flex-direction: column; }

.titlebar { position: relative; height: 23px; flex: none; background: #fff; display: flex; align-items: center; padding: 0 13px 0 3px; }
.app-icon { flex: none; }
.title { margin: 0 0 0 6px; font: 12px/20px "Open Sans", "Segoe UI", sans-serif; white-space: pre; flex: 1; }
.grip { position: absolute; top: 0; left: 49%; width: 37px; height: 13px; border: 1px solid #3b4478; background: #ccd4f0; display: grid; place-items: center; }
.grip span { width: 25px; height: 4px; border: solid #3b4478; border-width: 1px 0; }
.window-buttons { display: flex; }
.window-buttons button { width: 46px; height: 20px; border: 0; background: none; }
.window-buttons button:last-child { width: 25px; margin-left: 10px; }
.window-buttons svg { display: block; margin: auto; fill: none; stroke: #000; stroke-width: 1; }

.panes { flex: 1; min-height: 0; display: grid; grid-template-columns: 873fr 524fr 513fr; grid-template-rows: minmax(0, 1fr); gap: 5px; }
.pane { min-width: 0; display: flex; flex-direction: column; padding-bottom: 1px; }
.results { padding-right: 1px; }
.tab-strip { display: flex; }
.tabs { display: flex; align-items: flex-end; height: 20px; padding: 0 2px; min-width: 0; }
.tab-strip .tabs { flex: 1; overflow: hidden; }
.tab { position: relative; flex: none; height: 18px; min-width: 42px; margin-right: -1px; padding: 0 4px 0 5px; border: 1px solid #dcdcdc; border-bottom: 0; background: #f0f0f0; text-align: left; line-height: 16px; white-space: nowrap; }
.tab.selected { z-index: 1; height: 21px; margin: 0 -3px -1px -2px; padding: 0 6px 3px 7px; background: #fff; min-width: 45px; }
.inner { height: 24px; padding-left: 1px; }
.scroller { display: flex; width: 32px; height: 17px; margin: 2px 0 0; }
.scroller button { flex: 1; border: 1px solid #adadad; background: #f0f0f0; display: grid; place-items: center; }
.page { flex: 1; min-height: 0; display: flex; flex-direction: column; border: 1px solid #dcdcdc; background: #fff; padding: 0 5px 6px 6px; }
.results .page { padding-left: 5px; }
.inner-page { padding: 4px 6px; }

.routing { width: 529px; max-width: 100%; }
.routing label, .routing span { white-space: nowrap; }
fieldset { margin: 0; min-width: 0; border: 1px solid #dcdcdc; padding: 6px 5px; }
legend { padding: 0 2px; margin-left: 1px; line-height: 14px; }
.routing input[type="text"], textarea { display: block; width: 100%; min-width: 0; height: 20px; border: 1px solid #7a7a7a; background: #fff; }
textarea { resize: none; height: 50px; }
.num { text-align: center; }
input[type="checkbox"] { appearance: none; width: 13px; height: 13px; border: 1px solid #333; background: #fff; flex: none; }
.course { display: flex; flex-direction: column; gap: 6px; padding: 4px 5px 5px; }
.top-row { display: grid; grid-template-columns: 200px 135px 170px; gap: 6px; }
.top-row fieldset { display: flex; align-items: center; padding-bottom: 7px; }
.violations label { margin-left: 3px; }
.violations .num { flex: 0 0 74px; margin: 0 6px 0 9px; }
.violations label:last-child { margin-left: 5px; }
.toll label { margin: 0 6px 0 2px; flex: 0 0 53px; }
.network { padding-bottom: 12px; }
.nc-row { display: grid; grid-template-columns: 27px repeat(8, 48px); gap: 6px; align-items: center; padding-left: 4px; }
.nc-row span { padding-left: 1px; }
.ramp { grid-column: 2; }
.ramp-label { grid-column: 3 / 6; padding-left: 2px; }
.special { padding-bottom: 16px; }
.special-grid { display: grid; grid-template-columns: 176px 50px 71px 114px 48px; row-gap: 6px; align-items: center; padding-left: 4px; }
.special-grid label:nth-of-type(even) { grid-column: 4; }
.combined { padding-bottom: 12px; }
.combined-grid { display: grid; grid-template-columns: 178px 50px 51px 79px 48px; align-items: center; padding-left: 3px; }
.combined-grid label:nth-of-type(even) { grid-column: 4; }
.manoeuvre { padding-bottom: 26px; }
.manoeuvre-grid { display: grid; grid-template-columns: 85px 200px 13px auto; gap: 6px 8px; align-items: center; }
.bottom-row { display: grid; grid-template-columns: 242px 283px; gap: 4px; margin-top: 6px; }
.bottom-row fieldset { padding: 4px 4px 8px 5px; }
.pairs { display: grid; grid-template-columns: 1fr 81px; row-gap: 3px; align-items: center; }
.bottom-row .search { padding-bottom: 1px; }
.search .pairs { grid-template-columns: 1fr 148px; align-items: start; }
.search label { line-height: 20px; }

.charts, .results .charts { padding: 0; }
.chart { display: block; flex: 1; min-height: 0; width: 100%; }
.line, .diag { fill: none; stroke: #000; }
.diag { stroke: #444; }
.front { fill: #418cf0; }
.top { fill: #3676cb; }
.side { fill: #3069b4; }
.y-labels, .x-labels { font-size: 13px; text-anchor: end; }
.x-labels { text-anchor: middle; }
.legend { font-size: 11px; }

.map { position: relative; overflow: hidden; background: #faf3d6; }
.map-canvas { display: block; width: 100%; height: 100%; }
.forest { fill: #c5ddb9; }
.water { fill: none; stroke: #a6c8e4; stroke-width: 5; }
.rail { fill: none; stroke: #d4d4d4; stroke-width: 4; stroke-dasharray: 12 8; }
.border { fill: none; stroke: #b89c96; stroke-width: 5; }
.road { fill: none; stroke-linejoin: round; }
.minor-case { stroke: #c6c2b6; stroke-width: 14; }
.minor-fill { stroke: #f3efa8; stroke-width: 9; }
.major-case { stroke: #e8b48c; stroke-width: 17; }
.major-fill { stroke: #f3bd8c; stroke-width: 12; }
.motorway-case { stroke: #f6d458; stroke-width: 22; }
.motorway-fill { stroke: #fcd81e; stroke-width: 17; }
.place { font: 12px "Noto Sans", sans-serif; text-anchor: middle; fill: #333; stroke: #fff; stroke-width: 3px; stroke-linejoin: round; paint-order: stroke; }
.shield-a, .shield-b { font: 10px "Noto Sans", sans-serif; text-anchor: middle; }
.shield-a rect { fill: #0000f0; stroke: #fff; }
.shield-a text { fill: #fff; font-weight: bold; }
.shield-b rect { fill: #ff0; stroke: #222; }
.shield-b text { fill: #333; }
.route { fill: none; stroke: #3a36e0; stroke-width: 27; stroke-opacity: .66; stroke-linejoin: round; }
.stop { fill: #00dcdc; stroke: #004040; stroke-width: 3; }

.compass { position: absolute; left: 12px; top: 12px; width: 80px; height: 80px; border: 0; background: none; }
.compass svg { display: block; }
.calc { position: absolute; left: 96px; top: 13px; width: 50px; height: 21px; padding-right: 4px; border: 2px solid #0078d7; background: #90ee90; box-shadow: inset 0 0 0 1px #e1f5e1; line-height: 17px; }
.overview { position: absolute; right: 3px; top: 3px; width: 18px; height: 18px; border: 0; background: none; }
.overview svg { display: block; }
.zoom { position: absolute; right: 5px; top: 360px; width: 26px; height: 296px; display: flex; flex-direction: column; align-items: center; justify-content: space-between; padding: 5px 0; border-radius: 4px; background: rgba(72, 70, 66, .52); box-shadow: 0 0 0 1px rgba(255, 255, 255, .3); }
.zoom button { width: 16px; height: 16px; border: 0; border-radius: 8px; background: rgba(255, 255, 255, .14); color: #e8e8e0; font-size: 14px; line-height: 16px; }
.zoom input { appearance: none; writing-mode: vertical-lr; direction: rtl; width: 18px; height: 240px; background: linear-gradient(rgba(50, 60, 50, .5), rgba(50, 60, 50, .5)) 11px 0 / 2px 100% no-repeat, repeating-linear-gradient(transparent 0 6px, #d0d0c8 6px 7px, transparent 7px 12px) 5px 0 / 3px 100% no-repeat; }
.zoom input::-webkit-slider-thumb { appearance: none; width: 8px; height: 17px; margin-left: 8px; border: 1px solid #6c786c; border-radius: 4px; background: #a0aa9c; }
.layers { position: absolute; right: 5px; bottom: 28px; width: 98px; height: 25px; display: flex; align-items: center; gap: 6px; padding-left: 3px; border: 1px solid #8c8878; border-radius: 3px; background: rgba(96, 92, 84, .55); box-shadow: 0 0 0 1px rgba(255, 255, 255, .35); color: #e6e6da; font-size: 10px; font-weight: bold; }
.status { position: absolute; left: 5px; right: 5px; bottom: 4px; display: grid; grid-template-columns: 1fr auto 1fr; justify-items: start; }
.badge { display: flex; align-items: center; gap: 6px; height: 15px; padding: 0 4px; border-radius: 4px; background: rgba(64, 64, 64, .85); box-shadow: 0 0 0 1px rgba(255, 255, 255, .5); color: #e8e8e8; font: 11px/15px Roboto, sans-serif; white-space: nowrap; }
.coords { padding: 0 9px; }
.source { justify-self: end; }
.scale-bar { width: 69px; height: 6px; border: 1px solid #000; background: repeating-linear-gradient(90deg, #000 0 14px, #444 14px 28px); }
```
